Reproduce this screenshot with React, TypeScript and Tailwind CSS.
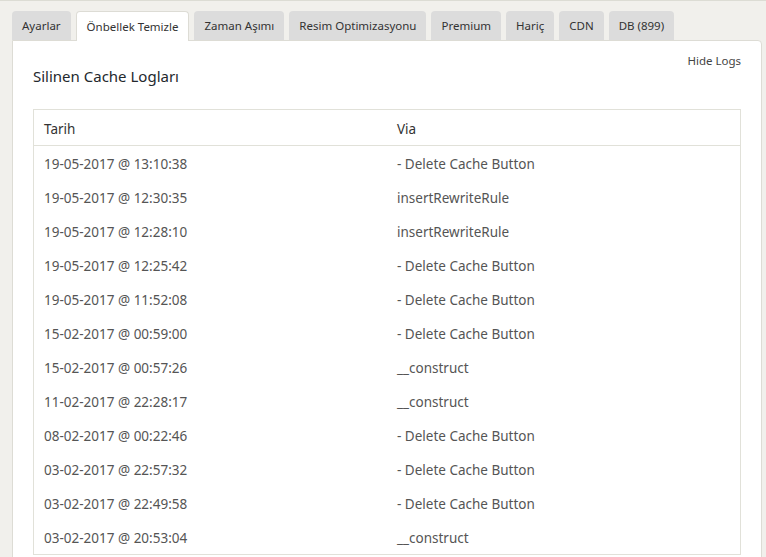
import React from "react";

const tabs = ["Ayarlar", "Önbellek Temizle", "Zaman Aşımı", "Resim Optimizasyonu", "Premium", "Hariç", "CDN", "DB (899)"];

const rows: [string, string][] = [
  ["19-05-2017 @ 13:10:38", "- Delete Cache Button"],
  ["19-05-2017 @ 12:30:35", "insertRewriteRule"],
  ["19-05-2017 @ 12:28:10", "insertRewriteRule"],
  ["19-05-2017 @ 12:25:42", "- Delete Cache Button"],
  ["19-05-2017 @ 11:52:08", "- Delete Cache Button"],
  ["15-02-2017 @ 00:59:00", "- Delete Cache Button"],
  ["15-02-2017 @ 00:57:26", "__construct"],
  ["11-02-2017 @ 22:28:17", "__construct"],
  ["08-02-2017 @ 00:22:46", "- Delete Cache Button"],
  ["03-02-2017 @ 22:57:32", "- Delete Cache Button"],
  ["03-02-2017 @ 22:49:58", "- Delete Cache Button"],
  ["03-02-2017 @ 20:53:04", "__construct"],
];

export default function App() {
  return (
    <div
      className="w-[766px] h-[557px] overflow-hidden bg-[#f1f0ec] border-t border-[#dcdcd4] text-[#444] text-[13.5px]"
      style={{ fontFamily: '"Noto Sans", "Open Sans", sans-serif' }}
    >
      <div className="pl-[12px] pr-[4px] pt-[10px]">
        <div className="flex gap-[5px] items-end text-[11.5px]">
          {tabs.map((t, i) =>
            i === 1 ? (
              <div
                key={t}
                className="relative z-10 h-[30px] px-[10px] pt-[1px] flex items-center bg-white border border-b-0 border-[#dddcd5] rounded-t-[4px] -mb-px text-[#333]"
              >
                {t}
              </div>
            ) : (
              <div
                key={t}
                className="h-[29px] px-[10px] pt-[1px] flex items-center bg-[#dcdcdc] rounded-t-[4px] text-[#333]"
              >
                {t}
              </div>
            )
          )}
        </div>
        <div className="bg-white border border-[#dddcd5] rounded-tr-[4px] px-[20px] pt-[11px] h-[600px]">
          <div className="flex justify-between items-start">
            <div className="pt-[13px] pb-[1px] text-[15px] text-[#23282d]">Silinen Cache Logları</div>
            <div className="text-[11.5px] text-[#444]">Hide Logs</div>
          </div>
          <div className="mt-[20px] border border-[#e1e1d9]">
            <div className="grid grid-cols-2 h-[36px] items-center pt-[4px] border-b border-[#e1e1d9] text-[#333]">
              <div className="pl-[10px]">Tarih</div>
              <div className="pl-[10px]">Via</div>
            </div>
            {rows.map(([d, v], i) => (
              <div key={i} className="grid grid-cols-2 h-[34px] items-center pt-[4px] text-[#555]">
                <div className="pl-[10px]">{d}</div>
                <div className="pl-[10px]">{v}</div>
              </div>
            ))}
          </div>
        </div>
      </div>
    </div>
  );
}
